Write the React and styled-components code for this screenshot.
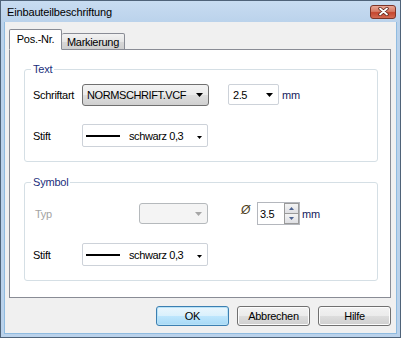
import React from 'react';
import styled, { createGlobalStyle } from 'styled-components';

const GlobalStyle = createGlobalStyle`
  html, body {
    margin: 0;
    padding: 0;
    background: #ffffff;
  }
  body {
    font-family: "Liberation Sans", Arial, sans-serif;
    font-size: 11px;
    color: #000;
  }
`;

const Window = styled.div`
  width: 401px;
  height: 338px;
  box-sizing: border-box;
  border: 1px solid #4f6379;
  background: linear-gradient(#c8dcf1, #bad2eb 22px, #bad2eb);
  display: flex;
  flex-direction: column;
`;

const TitleBar = styled.div`
  height: 21px;
  flex: none;
  display: flex;
  align-items: center;
  justify-content: space-between;
  padding: 0 4px 0 6px;
`;

const Title = styled.span`
  font-size: 11px;
  letter-spacing: -0.15px;
  color: #000;
`;

const CloseButton = styled.div`
  width: 26px;
  height: 14px;
  box-sizing: border-box;
  border: 1px solid #7c3428;
  border-radius: 3px;
  background: linear-gradient(#e9a896, #d67a65 45%, #c5462f 55%, #d36a52);
  display: flex;
  align-items: center;
  justify-content: center;
`;

const Body = styled.div`
  flex: 1;
  margin: 0 3px 3px;
  border: 1px solid #8fbbe0;
  border-top: none;
  background: #f0f0f0;
  display: flex;
  flex-direction: column;
  padding: 7px 5px 0 4px;
`;

const TabStrip = styled.div`
  display: flex;
  align-items: flex-end;
  margin-bottom: -1px;
  position: relative;
  z-index: 1;
`;

const Tab = styled.div`
  box-sizing: border-box;
  width: ${p => p.$width}px;
  height: ${p => (p.$active ? 21 : 17)}px;
  border: 1px solid #898c95;
  border-bottom: ${p => (p.$active ? '1px solid #fff' : '1px solid #898c95')};
  border-left: ${p => (p.$first ? '1px solid #898c95' : 'none')};
  border-radius: 2px 2px 0 0;
  background: ${p => (p.$active ? '#ffffff' : 'linear-gradient(#f2f2f2, #e6e6e6 50%, #d8d8d8 50%, #cfcfcf)')};
  display: flex;
  align-items: center;
  justify-content: center;
  letter-spacing: -0.3px;
  padding-bottom: ${p => (p.$active ? 1 : 0)}px;
`;

const Panel = styled.div`
  height: 249px;
  box-sizing: border-box;
  border: 1px solid #898c95;
  background: #fff;
  padding: 13px 12px 0 14px;
  display: flex;
  flex-direction: column;
  gap: 14px;
`;

const Group = styled.fieldset`
  margin: 0;
  border: 1px solid #d5dfe5;
  border-radius: 3px;
  padding: ${p => p.$top}px 8px 14px;
  display: flex;
  flex-direction: column;
  gap: 18px;
  min-width: 0;
`;

const Legend = styled.legend`
  padding: 0 2px;
  margin-left: -2px;
  line-height: 13px;
  color: #1b2f7c;
  letter-spacing: -0.2px;
`;

const Row = styled.div`
  display: flex;
  align-items: center;
  height: 23px;
`;

const Label = styled.span`
  width: ${p => p.$width}px;
  flex: none;
  padding-left: ${p => p.$indent || 0}px;
  box-sizing: border-box;
  color: ${p => (p.$disabled ? '#a3a3a3' : '#000')};
  letter-spacing: -0.3px;
`;

const Combo = styled.div`
  width: ${p => p.$width}px;
  height: ${p => p.$height}px;
  flex: none;
  box-sizing: border-box;
  margin-left: ${p => p.$gap || 0}px;
  display: flex;
  align-items: center;
  padding: 0 5px 0 4px;
  border-radius: ${p => (p.$kind === 'field' ? 2 : 3)}px;
  border: 1px solid
    ${p => (p.$kind === 'button' ? '#707070' : p.$kind === 'disabled' ? '#b5b9bc' : '#cdd2d9')};
  background: ${p =>
    p.$kind === 'button'
      ? 'linear-gradient(#f3f3f3, #ebebeb 50%, #dedede 50%, #d0d0d0)'
      : p.$kind === 'disabled'
      ? '#f4f4f4'
      : '#ffffff'};
  letter-spacing: -0.4px;
`;

const ComboText = styled.span`
  flex: 1;
  white-space: nowrap;
  overflow: hidden;
  margin-left: ${p => p.$gap || 0}px;
`;

const PenLine = styled.span`
  width: 34px;
  height: 2px;
  flex: none;
  margin-left: -1px;
  background: #000;
`;

const Unit = styled.span`
  margin-left: ${p => p.$gap}px;
  color: #14215c;
  letter-spacing: -0.2px;
`;

const Diameter = styled.span`
  margin-left: 33px;
  width: 16px;
  flex: none;
  align-self: flex-start;
  margin-top: 1px;
  font-size: 12px;
  font-style: italic;
  color: #4a3a18;
`;

const SpinBox = styled.div`
  width: 43px;
  height: 23px;
  flex: none;
  box-sizing: border-box;
  border: 1px solid #b4b7bd;
  background: #fff;
  display: flex;
  align-items: stretch;
`;

const SpinValue = styled.span`
  flex: 1;
  display: flex;
  align-items: center;
  padding-left: 2px;
  letter-spacing: -0.3px;
`;

const SpinButtons = styled.div`
  width: 15px;
  display: flex;
  flex-direction: column;
`;

const SpinButton = styled.div`
  flex: 1;
  box-sizing: border-box;
  border: 1px solid #9a9a9a;
  border-top: ${p => (p.$down ? 'none' : '1px solid #9a9a9a')};
  background: linear-gradient(#f4f4f4, #dedfe3);
  display: flex;
  align-items: center;
  justify-content: center;
`;

const ButtonRow = styled.div`
  display: flex;
  justify-content: flex-end;
  gap: 8px;
  margin-top: 8px;
`;

const Button = styled.div`
  width: 73px;
  height: 20px;
  box-sizing: border-box;
  border: 1px solid ${p => (p.$default ? '#3c7fb1' : '#707070')};
  border-radius: 3px;
  background: ${p =>
    p.$default
      ? 'linear-gradient(#eaf6fd, #d9f0fc 50%, #bee6fd 50%, #a7d9f5)'
      : 'linear-gradient(#f2f2f2, #ebebeb 50%, #dddddd 50%, #cfcfcf)'};
  box-shadow: ${p => (p.$default ? 'inset 0 0 0 1px #b8e2f7' : 'inset 0 0 0 1px #fcfcfc')};
  display: flex;
  align-items: center;
  justify-content: center;
  letter-spacing: -0.3px;
`;

function Arrow({ color = '#000', small }) {
  return small ? (
    <svg width="5" height="3" viewBox="0 0 5 3" style={{ flex: 'none', marginTop: 4 }}>
      <polygon points="0,0 5,0 2.5,3" fill={color} />
    </svg>
  ) : (
    <svg width="7" height="4" viewBox="0 0 7 4" style={{ flex: 'none' }}>
      <polygon points="0,0 7,0 3.5,4" fill={color} />
    </svg>
  );
}

function SpinArrow({ up }) {
  return (
    <svg width="5" height="3" viewBox="0 0 5 3">
      <polygon points={up ? '0,3 5,3 2.5,0' : '0,0 5,0 2.5,3'} fill="#4c6290" />
    </svg>
  );
}

function PenCombo() {
  return (
    <Combo $kind="field" $width={126} $height={23}>
      <PenLine />
      <ComboText $gap={9}>schwarz 0,3</ComboText>
      <Arrow small />
    </Combo>
  );
}

export default function App() {
  return (
    <>
      <GlobalStyle />
      <Window>
        <TitleBar>
          <Title>Einbauteilbeschriftung</Title>
          <CloseButton>
            <svg width="11" height="9" viewBox="0 0 11 9">
              <path d="M2 1.5 L9 7.5 M9 1.5 L2 7.5" stroke="#5a2219" strokeWidth="3.4" strokeLinecap="round" />
              <path d="M2 1.5 L9 7.5 M9 1.5 L2 7.5" stroke="#ffffff" strokeWidth="1.8" strokeLinecap="round" />
            </svg>
          </CloseButton>
        </TitleBar>
        <Body>
          <TabStrip>
            <Tab $active $first $width={53}>Pos.-Nr.</Tab>
            <Tab $width={63}>Markierung</Tab>
          </TabStrip>
          <Panel>
            <Group $top={7}>
              <Legend>Text</Legend>
              <Row>
                <Label $width={49}>Schriftart</Label>
                <Combo $kind="button" $width={127} $height={22}>
                  <ComboText>NORMSCHRIFT.VCF</ComboText>
                  <Arrow />
                </Combo>
                <Combo $kind="field" $width={51} $height={21} $gap={19}>
                  <ComboText>2.5</ComboText>
                  <Arrow />
                </Combo>
                <Unit $gap={3}>mm</Unit>
              </Row>
              <Row>
                <Label $width={49}>Stift</Label>
                <PenCombo />
              </Row>
            </Group>
            <Group $top={13}>
              <Legend>Symbol</Legend>
              <Row>
                <Label $width={106} $indent={2} $disabled>Typ</Label>
                <Combo $kind="disabled" $width={69} $height={21}>
                  <ComboText />
                  <Arrow color="#a6a6a6" />
                </Combo>
                <Diameter>Ø</Diameter>
                <SpinBox>
                  <SpinValue>3.5</SpinValue>
                  <SpinButtons>
                    <SpinButton><SpinArrow up /></SpinButton>
                    <SpinButton $down><SpinArrow /></SpinButton>
                  </SpinButtons>
                </SpinBox>
                <Unit $gap={2}>mm</Unit>
              </Row>
              <Row>
                <Label $width={49}>Stift</Label>
                <PenCombo />
              </Row>
            </Group>
          </Panel>
          <ButtonRow>
            <Button $default>OK</Button>
            <Button>Abbrechen</Button>
            <Button>Hilfe</Button>
          </ButtonRow>
        </Body>
      </Window>
    </>
  );
}
